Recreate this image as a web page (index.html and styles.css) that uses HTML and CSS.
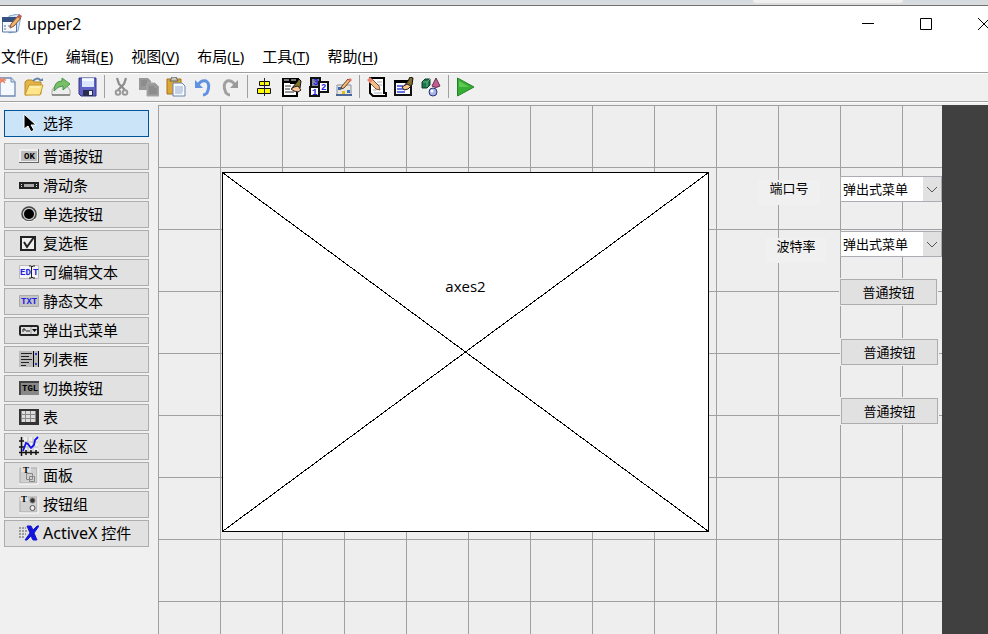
FILE: index.html
```html
<!DOCTYPE html>
<html lang="zh-CN">
<head>
<meta charset="utf-8">
<title>upper2</title>
<link rel="stylesheet" href="styles.css">
</head>
<body>
<div class="backdrop"><span></span></div>
<header class="titlebar">
  <svg class="icon" viewBox="0 0 20 20"><path d="M7 2l9-2 3 2-3 15-9 2z" fill="#d5e5f5" stroke="#88a8ce"/><path d="M.5 4h14v14H.5z" fill="#f5f7fb" stroke="#5b78a5"/><path d="M0 3h15v5H0z" fill="#35517f"/><path d="M2 11h2v2H2zM2 14h2v2H2zM6 11h2v2H6z" fill="#a4b4ca"/><path d="M8 14l1-4 7-8 3 2-7 8z" fill="#f0b56d" stroke="#855037"/><path d="M15 3l2-3 3 2-2 3z" fill="#b76559"/></svg>
  <h1>upper2</h1>
  <div class="window-controls">
    <button type="button" aria-label="最小化"><svg viewBox="0 0 12 12"><path d="M0 5.500h12"/></svg></button>
    <button type="button" aria-label="最大化"><svg viewBox="0 0 12 12"><path d="M.5.5h11v11H.5z"/></svg></button>
    <button type="button" aria-label="关闭"><svg viewBox="0 0 12 12"><path d="M0 0l12 12M12 0L0 12"/></svg></button>
  </div>
</header>
<nav class="menubar">
  <button type="button">文件(<u>F</u>)</button>
  <button type="button">编辑(<u>E</u>)</button>
  <button type="button">视图(<u>V</u>)</button>
  <button type="button">布局(<u>L</u>)</button>
  <button type="button">工具(<u>T</u>)</button>
  <button type="button">帮助(<u>H</u>)</button>
</nav>
<div class="toolbar">
  <button type="button" aria-label="新建"><svg class="icon" viewBox="0 0 20 20"><path d="M3 1h11l4 4v14H3z" fill="#f4f9ff" stroke="#7088b4" stroke-width="1.300"/><path d="M14 1v4h4" fill="#cfe0f5" stroke="#7088b4"/><path d="M3 1l5 5M8 1L3 6M3 3h6" stroke="#ed8462" stroke-width="1.500"/></svg></button>
  <button type="button" aria-label="打开"><svg class="icon" viewBox="0 0 20 20"><path d="M9 4q5-5 8 0" fill="none" stroke="#6685a7" stroke-width="2"/><path d="M15 4h4V1z" fill="#6685a7"/><path d="M1 18V5l2-2h5l2 2h7v12z" fill="#e4b44b" stroke="#b98b28"/><path d="M1 18L5 8h14l-3 10z" fill="#ffe58a" stroke="#c79b32"/><path d="M6 10h10" stroke="#fff7cd"/></svg></button>
  <button type="button" aria-label="导出"><svg class="icon" viewBox="0 0 20 20"><path d="M1 18v-5l3-4h12l3 4v5z" fill="#ededed" stroke="#aaa"/><path d="M1 17h18v2H1z" fill="#8f8f8f"/><path d="M3 14q0-10 8-10V1l8 6-7 6v-4q-5 0-9 5z" fill="#78bf68" stroke="#42944a"/></svg></button>
  <button type="button" class="save" aria-label="保存"><svg class="icon" viewBox="0 0 19 20"><path d="M1 1h17v18H3l-2-2z" fill="#5f62c4" stroke="#353783"/><path d="M4 1h12v9H4z" fill="#dce5ff"/><path d="M4 2h12v2H4z" fill="#f8faff"/><path d="M5 13h10v6H5z" fill="#292d50"/><path d="M11 14h3v4h-3z" fill="#eee"/></svg></button>
  <span class="divider"></span>
  <button type="button" aria-label="剪切"><svg class="icon" viewBox="0 0 20 20"><path d="M5 1l2 6 6 6M14 1l-2 6-6 6" fill="none" stroke="#8d8d8d" stroke-width="2.300"/><circle cx="6" cy="15.500" r="2.300" fill="none" stroke="#999" stroke-width="2"/><circle cx="13" cy="15.500" r="2.300" fill="none" stroke="#999" stroke-width="2"/></svg></button>
  <button type="button" aria-label="复制"><svg class="icon" viewBox="0 0 20 20"><path d="M0 1h9l3 3v9H0z" fill="#999"/><path d="M8 6h8l4 4v9H8z" fill="#999" stroke="#aaa"/><path d="M2 4h6M2 6h6M2 8h5M10 10h5M10 12h8M10 14h8M10 16h8" stroke="#808080"/></svg></button>
  <button type="button" aria-label="粘贴"><svg class="icon" viewBox="0 0 20 20"><path d="M1 2h14v15H1z" fill="#dda735" stroke="#a6731c"/><path d="M4 4l2-4h4l2 4z" fill="#c8c6bd" stroke="#5d635f"/><path d="M7 6h9l3 3v10H7z" fill="#f6faff" stroke="#6b83ac"/><path d="M9 10h8M9 12h8M9 14h8M9 16h7" stroke="#93a9cc"/></svg></button>
  <button type="button" aria-label="撤销"><svg class="icon" viewBox="0 0 20 20"><path d="M5 8q3-5 8-4 5 3 1 12-2 2-4 2" fill="none" stroke="#5f91e3" stroke-width="3"/><path d="M2 3v8h8z" fill="#5f91e3"/></svg></button>
  <button type="button" aria-label="重做"><svg class="icon" viewBox="0 0 20 20"><path d="M15 8q-3-5-8-4-5 3-1 12 2 2 4 2" fill="none" stroke="#a0a0a0" stroke-width="3"/><path d="M18 3v8h-8z" fill="#999"/></svg></button>
  <span class="divider"></span>
  <button type="button" aria-label="对齐对象"><svg class="icon" viewBox="0 0 20 20"><path d="M4.500 4.500h10v4h-10zM2.500 11.500h13v5h-13z" fill="#ff0" stroke="#111"/><path d="M9.500 1v18" stroke="#223"/></svg></button>
  <button type="button" aria-label="菜单编辑器"><svg class="icon" viewBox="0 0 20 20"><path d="M1 2h8v4h6v13H1z" fill="#fff" stroke="#000" stroke-width="2"/><path d="M0 1h17v5H0z"/><path d="M2 3h5M9 3h5" stroke="#eee"/><path d="M3 9h6M3 12h5M3 15h9" stroke="#333"/><path d="M10 11l5-6 2-3 2 2-1 7-4 2z" fill="#86752e" stroke="#111"/><path d="M9 12l3-2 4-1 3 4-3 2-4-1z" fill="#ffc595" stroke="#222"/></svg></button>
  <button type="button" aria-label="Tab 键顺序编辑器"><svg class="icon glyph-blue" viewBox="0 0 20 20"><path d="M2 1h9v10H2z" fill="#85889a" stroke="#111" stroke-width="2"/><path d="M10 5h9v10h-9z" fill="#fff" stroke="#111" stroke-width="2"/><path d="M1 10h9v9H1z" fill="#fff" stroke="#111" stroke-width="2"/><text x="4" y="8">3</text><text x="12" y="13">2</text><text x="3" y="18">1</text></svg></button>
  <button type="button" class="compact" aria-label="工具栏编辑器"><svg class="icon" viewBox="0 0 16 20"><path d="M1 8h14v10H1z" fill="#e7e7dc" stroke="#8a90a1"/><path d="M0 18h16" stroke="#4b6699" stroke-width="2"/><path d="M2 10h3v3H2z" fill="#366bbf"/><path d="M6 14h3v3H6z" fill="#e9b920"/><path d="M11 13h3v3h-3z" fill="#3c72c2"/><path d="M5 12l1-3 6-7 2 2-6 7z" fill="#f9bc70" stroke="#633e30"/><path d="M12 3l2-2 2 2-2 2z" fill="#e57360"/></svg></button>
  <span class="divider"></span>
  <button type="button" aria-label="编辑器"><svg class="icon" viewBox="0 0 20 20"><path d="M3 1h14v15h2v3H6l-3-3z" fill="#fff" stroke="#000" stroke-width="2"/><path d="M10 5h5M11 8h4M6 13h3M7 16h8" stroke="#aaa"/><path d="M2 5l3-3 7 7 1 4-4-1z" fill="#f3bd89" stroke="#78503d"/><path d="M0 3l3-3 3 3-3 3z" fill="#ed826f"/></svg></button>
  <button type="button" aria-label="属性检查器"><svg class="icon" viewBox="0 0 20 20"><path d="M1 4h16v14H1z" fill="#fff" stroke="#111" stroke-width="2"/><path d="M0 3h18v3H0z"/><path d="M3 9h6M3 12h10M3 15h8" stroke="#3346dd" stroke-width="1.500"/><path d="M10 9l4-5 2-4 3 1-1 7-4 3z" fill="#82702e" stroke="#111"/><path d="M8 10l5-3 4 2-3 3-4 1z" fill="#ffc48c" stroke="#222"/></svg></button>
  <button type="button" aria-label="对象浏览器"><svg class="icon" viewBox="0 0 20 20"><path d="M1 5l3-3h5v6l-3 3H1z" fill="#177849" stroke="#113b2b"/><path d="M2 5h4v5M6 5l3-3" fill="none" stroke="#6ab48a"/><path d="M11 9l4-8 4 8q-4 3-8 0z" fill="#c65b94" stroke="#63304f"/><circle cx="12" cy="15" r="4" fill="#a6b3ed" stroke="#29366d"/><circle cx="11" cy="14" r="1.500" fill="#fff"/></svg></button>
  <span class="divider"></span>
  <button type="button" aria-label="运行"><svg class="icon" viewBox="0 0 20 20"><path d="M1.500 1L18 10 1.500 19z" fill="#36af35" stroke="#228329"/><path d="M3 4l10 6H3z" fill="#62c954"/></svg></button>
</div>
<main class="workspace">
  <aside class="palette">
    <button type="button" class="selected"><svg class="icon" viewBox="0 0 20 20"><path d="M5 1v15l4-3 3 6 3-2-3-5h5z" stroke="#fff"/></svg>选择</button>
    <button type="button"><svg class="icon" viewBox="0 0 20 20"><path d="M0 3h20v14H0z" fill="#666"/><path d="M0 3h19v13H0z" fill="#eee"/><path d="M2 5h16v10H2z" fill="#bdbdbd"/><text x="5" y="13">OK</text></svg>普通按钮</button>
    <button type="button"><svg class="icon crisp" viewBox="0 0 20 20"><path d="M0 7h20v7H0z" fill="#222"/><path d="M5 9h10v3H5z" fill="#aaa"/><path d="M2 9h1v1H2zM2 11h1v1H2zM17 9h1v1h-1zM17 11h1v1h-1z" fill="#ddd"/></svg>滑动条</button>
    <button type="button"><svg class="icon" viewBox="0 0 20 20"><circle cx="10" cy="10" r="7" fill="#ccc" stroke="#444" stroke-width="1.500"/><path d="M4 15a8 8 0 0 0 12 0" fill="none" stroke="#fff"/><circle cx="10" cy="10" r="5"/></svg>单选按钮</button>
    <button type="button"><svg class="icon" viewBox="0 0 20 20"><path d="M2 4h14v13H2z" fill="#eee" stroke="#222" stroke-width="2"/><path d="M5 9l3 5 7-10" fill="none" stroke="#222" stroke-width="2"/></svg>复选框</button>
    <button type="button"><svg class="icon glyph-blue" viewBox="0 0 20 20"><path d="M.5 3.500h19v13H.5z" fill="#f4f4f4" stroke="#bbb"/><text x="1" y="13">ED</text><text x="14" y="13">T</text><path d="M10 4h2l1 1 1-1h2M12.500 5v10M10 16h2l1-1 1 1h2" fill="none" stroke="#222"/></svg>可编辑文本</button>
    <button type="button"><svg class="icon glyph-blue" viewBox="0 0 20 20"><path d="M.5 4.500h19v11H.5z" fill="#c4c4c4" stroke="#aaa"/><text x="2" y="13">TXT</text></svg>静态文本</button>
    <button type="button"><svg class="icon" viewBox="0 0 20 20"><rect x="1" y="6" width="18" height="9" rx="1" fill="#ddd" stroke="#222" stroke-width="2"/><path d="M4 9v3M4 9h2v2M8 10v2M10 10v2" fill="none" stroke="#222"/><path d="M13 9h5l-2.500 3z"/><path d="M12 7v7" stroke="#999"/></svg>弹出式菜单</button>
    <button type="button"><svg class="icon crisp" viewBox="0 0 20 20"><path d="M0 2h20v16H0z" fill="#bbb"/><path d="M2 4h11M2 7h8M2 10h11M2 13h8M2 16h5" stroke="#222"/><path d="M14 2h1v16h-1zM19 2h1v16h-1z"/><path d="M16 4h2v2h-2zM16 14h2v2h-2z" fill="#33c"/></svg>列表框</button>
    <button type="button"><svg class="icon" viewBox="0 0 20 20"><path d="M0 3h20v14H0z" fill="#444"/><path d="M2 5h18v12H2z" fill="#888"/><text x="3" y="13">TGL</text></svg>切换按钮</button>
    <button type="button"><svg class="icon crisp" viewBox="0 0 20 20"><path d="M0 2h20v16H0z" fill="#333"/><path d="M2 4h15v11H2z" fill="#888"/><path d="M3 4h3v3H3zM7 4h4v3H7zM12 4h4v3h-4zM3 8h3v3H3zM7 8h4v3H7zM12 8h4v3h-4zM3 12h3v3H3zM7 12h4v3H7zM12 12h4v3h-4z" fill="#ddd"/></svg>表</button>
    <button type="button"><svg class="icon" viewBox="0 0 20 20"><path d="M5 1h14v14H5z" fill="#eee"/><path d="M9 1v14M14 1v14M5 6h14M5 11h14" stroke="#bbb"/><path d="M2.500 1v19M0 16.500h20M0 5h5M0 11h5M7 14v5M12 14v5M17 14v5" stroke="#111" stroke-width="1.500"/><path d="M4 15l3-8 2 1 3 4 3-3 1-5 3-3" fill="none" stroke="#1010f0" stroke-width="1.800"/></svg>坐标区</button>
    <button type="button"><svg class="icon" viewBox="0 0 20 20"><path d="M1 3h17v15H1z" fill="#d0d0d0" stroke="#aaa"/><path d="M0 19h19V3" fill="none" stroke="#fff"/><path d="M7.500 8.500h6v6h-6zM10.500 11.500h5v5h-5z" fill="none" stroke="#888"/><path d="M2 0h10v7H2z" fill="#e1e1e1"/><text class="letter" x="4" y="8">T</text></svg>面板</button>
    <button type="button"><svg class="icon" viewBox="0 0 20 20"><path d="M1 3h17v15H1z" fill="#d0d0d0" stroke="#aaa"/><path d="M0 19h19V3" fill="none" stroke="#fff"/><path d="M1 0h8v7H1z" fill="#e1e1e1"/><text class="letter" x="2" y="8">T</text><circle cx="13.500" cy="6.500" r="2.500" fill="#333" stroke="#777"/><circle cx="13.500" cy="14" r="2.500" fill="#eee" stroke="#555"/></svg>按钮组</button>
    <button type="button"><svg class="icon" viewBox="0 0 20 20"><path d="M0 5h7M0 8h8M0 11h7M0 14h6" stroke="#555" stroke-dasharray="2 1"/><path d="M8 3h4l2 4 4-4h2l-5 7 3 7h-4l-2-4-4 4H6l5-7z" fill="#1515d8" stroke="#1515d8"/></svg><span><span class="latin">ActiveX</span> 控件</span></button>
  </aside>
  <section class="canvas" aria-label="布局区">
    <div class="axes"><svg viewBox="0 0 485 358" preserveAspectRatio="none"><path d="M0 0l485 358M485 0L0 358"/></svg><span>axes2</span></div>
    <label class="static port-label" for="port">端口号</label>
    <div class="popup port"><select id="port"><option>弹出式菜单</option></select><svg viewBox="0 0 18 24"><path d="M4 10l5 5 5-5"/></svg></div>
    <label class="static baud-label" for="baud">波特率</label>
    <div class="popup baud"><select id="baud"><option>弹出式菜单</option></select><svg viewBox="0 0 18 24"><path d="M4 10l5 5 5-5"/></svg></div>
    <button type="button" class="push push-one">普通按钮</button>
    <button type="button" class="push push-two">普通按钮</button>
    <button type="button" class="push push-three">普通按钮</button>
  </section>
  <div class="outside"></div>
</main>
</body>
</html>
```
FILE: styles.css
```css
* {
  box-sizing: border-box;
}

body {
  display: flex;
  flex-direction: column;
  min-height: 100vh;
  margin: 0;
  overflow: hidden;
  background: #f0f0f0;
  color: #000;
  font: 15px/20px "Noto Sans", "Noto Sans CJK SC", sans-serif;
}

button,
select {
  margin: 0;
  padding: 0;
  border: 0;
  border-radius: 0;
  background: none;
  color: inherit;
  font: inherit;
}

.icon {
  display: block;
  flex: none;
  width: 20px;
  height: 20px;
}

.icon text {
  font: bold 9px/9px "Liberation Mono", monospace;
}

.icon .letter {
  font: bold 9px/9px "Liberation Serif", serif;
}

.glyph-blue text {
  fill: #2020e0;
}

.crisp {
  shape-rendering: crispEdges;
}

.backdrop {
  display: flex;
  justify-content: flex-end;
  height: 6px;
  padding-right: 85px;
  border-bottom: 1px solid #707070;
  background: linear-gradient(#d5dbdf 3px, #dcdcdc 3px);
}

.backdrop span {
  width: 150px;
  height: 3px;
  border-radius: 0 0 8px 8px;
  background: #f0f0f0;
}

.titlebar {
  display: flex;
  align-items: center;
  gap: 5px;
  height: 36px;
  padding-left: 2px;
  overflow: hidden;
  background: #fff;
}

.titlebar h1 {
  margin: 0;
  font-size: 16px;
  font-weight: 400;
}

.window-controls {
  display: flex;
  margin: 0 -25px 0 auto;
}

.window-controls button {
  display: grid;
  place-items: center;
  width: 58px;
  height: 36px;
}

.window-controls svg {
  width: 12px;
  height: 12px;
  fill: none;
  stroke: #000;
}

.menubar {
  display: flex;
  gap: 18px;
  height: 31px;
  padding: 4px 1px 6px;
  border-bottom: 1px solid #a0a0a0;
  background: #fff;
}

.menubar u {
  text-underline-offset: 2px;
}

.toolbar {
  display: flex;
  align-items: center;
  gap: 7px;
  height: 29px;
  margin-left: -3px;
  padding-bottom: 2px;
  border-top: 1px solid #fff;
  border-bottom: 1px solid #a0a0a0;
}

.toolbar .save .icon {
  width: 19px;
}

.toolbar .compact .icon {
  width: 16px;
}

.divider {
  width: 1px;
  height: 23px;
  background: #a0a0a0;
}

.workspace {
  display: flex;
  flex: 1;
  padding-top: 2px;
  border-top: 1px solid #fff;
}

.palette {
  display: flex;
  flex: 0 0 158px;
  flex-direction: column;
  gap: 2px;
  padding: 5px 9px 0 4px;
}

.palette button {
  display: flex;
  align-items: center;
  gap: 4px;
  height: 27px;
  padding: 0 0 2px 14px;
  border: 1px solid #adadad;
  background: #e1e1e1;
}

.palette .selected {
  margin-bottom: 4px;
  border-color: #005499;
  background: #cce4f7;
}

.latin {
  font-size: 16px;
}

.canvas {
  position: relative;
  flex: 1;
  background:
    linear-gradient(#a0a0a0 1px, transparent 1px) 0 0 / 62px 62px,
    linear-gradient(90deg, #a0a0a0 1px, transparent 1px) 0 0 / 62px 62px,
    #eee;
  font-size: 13px;
}

.outside {
  flex: 0 0 46px;
  background: #404040;
}

.axes {
  position: absolute;
  left: 64px;
  top: 67px;
  display: grid;
  place-items: center;
  width: 487px;
  height: 360px;
  border: 1px solid #000;
  background: #fff;
}

.axes svg {
  grid-area: 1 / 1;
  width: 100%;
  height: 100%;
  stroke: #000;
  shape-rendering: crispEdges;
}

.axes span {
  grid-area: 1 / 1;
  padding-bottom: 132px;
  font: 15px/20px "Open Sans", sans-serif;
}

.static {
  position: absolute;
  width: 62px;
  height: 25px;
  background: #f0f0f0;
  line-height: 16px;
  text-align: center;
}

.port-label {
  left: 600px;
  top: 75px;
}

.baud-label {
  left: 607px;
  top: 133px;
}

.popup {
  position: absolute;
  left: 682px;
  display: flex;
  width: 102px;
  height: 26px;
  border: 1px solid #abadb3;
  background: #fff;
}

.popup select {
  flex: 1;
  min-width: 0;
  padding-left: 2px;
  appearance: none;
}

.popup svg {
  width: 18px;
  background: #e1e1e1;
  fill: none;
  stroke: #555;
  pointer-events: none;
}

.port {
  top: 71px;
}

.baud {
  top: 126px;
}

.push {
  position: absolute;
  left: 683px;
  width: 97px;
  height: 26px;
  border: 1px solid #adadad;
  background: #e1e1e1;
  box-shadow: 0 0 0 1px #eee;
}

.push-one {
  left: 682px;
  top: 174px;
}

.push-two {
  top: 234px;
}

.push-three {
  top: 293px;
}
```
